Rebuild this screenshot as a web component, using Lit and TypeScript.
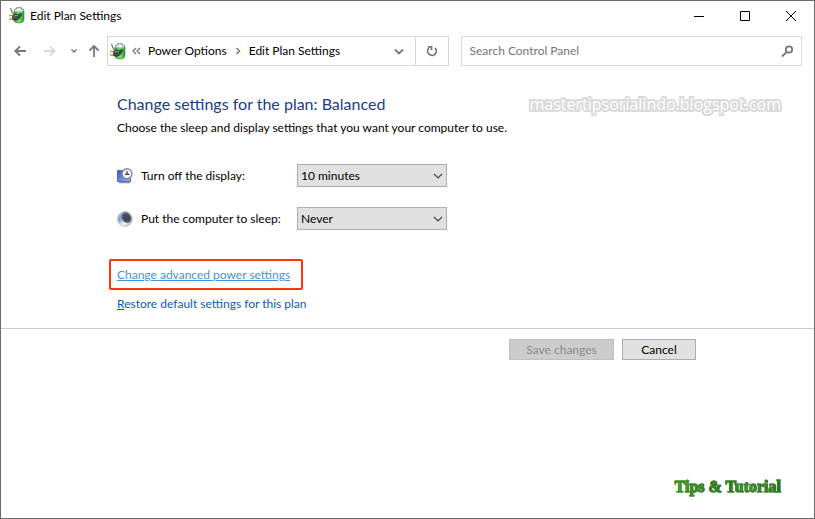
import { LitElement, html, css, svg } from "lit";
import { customElement, property } from "lit/decorators.js";

@customElement("power-icon")
class PowerIcon extends LitElement {
  static styles = css`
    :host { display: block; width: 16px; height: 17px; flex: none; }
    svg { display: block; }
  `;
  render() {
    return html`<svg width="16" height="17" viewBox="0 0 16 17" aria-hidden="true">
      <defs>
        <linearGradient id="g" x1="0" x2="1"><stop offset="0" stop-color="#2a9a35" /><stop offset=".5" stop-color="#7bea6c" /><stop offset="1" stop-color="#1f9a38" /></linearGradient>
      </defs>
      <path d="M5 4Q5.300 1.800 7.500 1.600V.8Q10 0 12.300.8v.8Q14.800 2 15 4v9Q14.500 15.800 10 16 5.500 16 5 13.500z" fill="url(#g)" stroke="#3c7a45" stroke-width=".6" />
      <path d="M5.400 3.500Q5.700 2.100 7.800 1.900V1Q10 .3 12 1v.9Q14.600 2.200 14.700 4 12 5.500 5.400 4.500z" fill="#eef3ef" stroke="#8a998f" stroke-width=".6" />
      <path d="M1.500 1C2 3.500 3 5.500 5 7.300" fill="none" stroke="#6d7379" stroke-width="1.200" />
      <path d="M0 8.500h4M0 12h4" stroke="#c99e25" stroke-width="1.600" />
      <path d="M3.500 8.300Q6 6.500 9 7.400L12 6.500l.8 1.500-2.800 4Q7 14 3.500 12.700z" fill="#44494c" stroke="#2b2f31" stroke-width=".5" />
      <path d="M4.500 9.200Q6.500 8 9 8.700" fill="none" stroke="#969b9e" stroke-width="1.100" />
    </svg>`;
  }
}

const icons = {
  back: svg`<path d="M14 8H3M8 3.500 3.300 8 8 12.500" />`,
  forward: svg`<path d="M2 8h11M8 3.500 12.700 8 8 12.500" />`,
  up: svg`<path d="M8 14V3M3.300 7.700 8 3l4.700 4.700" />`,
  recent: svg`<path d="M5.500 6.500 8 9l2.500-2.500" stroke-width="1.500" />`,
  down: svg`<path d="M4 6.500l4 4 4-4" />`,
  thin: svg`<path d="M4 6l4 4 4-4" stroke-width="1.200" />`,
  right: svg`<path d="M6.500 5l3 3-3 3" stroke-width="1.500" />`,
  left: svg`<path d="M7 5 4 8l3 3M11 5 8 8l3 3" stroke-width="1.300" />`,
  refresh: svg`<path d="M4.700 5.200A4.300 4.300 0 1 0 11 5M4 3.800h3.500v3.500" />`,
  search: svg`<circle cx="10" cy="6.500" r="3.200" /><path d="M7.700 9 3 13.500" />`,
};

@customElement("line-icon")
class LineIcon extends LitElement {
  @property() name: keyof typeof icons = "down";
  static styles = css`
    :host { display: block; width: 16px; height: 16px; flex: none; }
    svg { display: block; fill: none; stroke: currentColor; stroke-width: 1.8; }
  `;
  render() {
    return html`<svg width="16" height="16" viewBox="0 0 16 16" aria-hidden="true">${icons[this.name]}</svg>`;
  }
}

@customElement("app-root")
class AppRoot extends LitElement {
  static styles = css`
    :host {
      display: block;
      font: 12px/16px Lato, "Open Sans", sans-serif;
      color: #000;
    }
    * { box-sizing: border-box; }
    button, select, input { font: inherit; color: inherit; border-radius: 0; margin: 0; }
    button { padding: 0; border: 0; background: none; display: flex; align-items: center; justify-content: center; }
    .window {
      display: flex;
      flex-direction: column;
      min-height: 100vh;
      background: #fff;
      border: 1px solid #6b6a6c;
    }
    .titlebar { display: flex; align-items: center; height: 29px; padding-left: 8px; gap: 5px; }
    .title { flex: 1; margin: 0; font-size: 12px; font-weight: 400; }
    .caption { display: flex; }
    .caption button { width: 46px; height: 29px; }
    .caption svg { fill: none; stroke: #000; }
    .navbar { display: grid; grid-template-columns: 95px 1fr 1fr; align-items: center; padding: 6px 12px 0 11px; color: #777; }
    .history { display: flex; align-items: center; }
    .history button { height: 30px; width: 16px; }
    .history .forward { margin-left: 14px; color: #d8d8d8; }
    .history .recent { margin-left: 8px; }
    .history .up { margin-left: 4px; }
    .address, .search { min-width: 0; display: flex; align-items: center; height: 30px; border: 1px solid #d9d9d9; }
    .address { margin-right: 6px; padding-left: 2px; }
    .crumbs { flex: 1; display: flex; align-items: center; gap: 3px; }
    .crumbs a { color: #000; text-decoration: none; white-space: nowrap; }
    .address .drop { width: 32px; height: 28px; }
    .address .refresh { width: 33px; height: 28px; border-left: 1px solid #d9d9d9; }
    .search { margin-left: 6px; padding: 0 6px 0 8px; }
    .search input { flex: 1; min-width: 0; border: 0; padding: 0; background: none; outline: 0; }
    .search input::placeholder { color: #757575; opacity: 1; }
    .content { position: relative; padding: 28px 32px 16px 116px; }
    .watermark {
      position: absolute;
      top: 26px;
      right: 33px;
      font: 16px/24px "Open Sans", sans-serif;
      color: #fff;
      -webkit-text-stroke: 4px #dadada;
      paint-order: stroke fill;
    }
    h1 { margin: 0; font-size: 16px; line-height: 20px; font-weight: 400; color: #1a3c8c; }
    .intro { margin: 6px 0 28px; }
    .settings { display: grid; grid-template-columns: 16px 148px 150px; column-gap: 8px; row-gap: 20px; align-items: center; }
    .settings label { white-space: nowrap; }
    .picker { display: grid; align-items: center; }
    .picker select, .picker line-icon { grid-area: 1 / 1; }
    .picker select { appearance: none; width: 100%; height: 23px; padding: 0 3px; border: 1px solid #adadad; background: #e1e1e1; }
    .picker line-icon { justify-self: end; margin-right: 1px; color: #444; pointer-events: none; }
    .links { display: flex; flex-direction: column; align-items: flex-start; gap: 6px; margin: 29px 0 0 -8px; }
    .links a { color: #0a5cbd; text-decoration: none; }
    .links .advanced { padding: 6px 11px 5px 6px; border: 2px solid #f9360c; border-radius: 2px; color: #3f93dc; text-decoration: underline; }
    .links .restore { margin-left: 8px; }
    .actions { display: flex; justify-content: flex-end; gap: 8px; padding: 10px 118px 0 0; border-top: 1px solid #ccc; }
    .actions button { height: 21px; border: 1px solid #adadad; background: #e1e1e1; }
    .actions .save { width: 105px; border-color: #bfbfbf; background: #ccc; color: #8a8a8a; }
    .actions .cancel { width: 74px; }
    .brand {
      align-self: flex-end;
      margin: auto 33px 19px 0;
      font: 700 16px/24px "Liberation Serif", serif;
      color: transparent;
      background: linear-gradient(90deg, #5db32b, #2f7a22 30%, #2c6b2a 50%, #57984b 70%, #1d5a1d);
      background-clip: text;
      -webkit-background-clip: text;
      -webkit-text-stroke: 1px #3a8428;
    }
  `;

  render() {
    return html`
      <div class="window">
        <header class="titlebar">
          <power-icon></power-icon>
          <h2 class="title">Edit Plan Settings</h2>
          <div class="caption">
            <button aria-label="Minimize"><svg width="12" height="12"><path d="M1 6.500h10" /></svg></button>
            <button aria-label="Maximize"><svg width="12" height="12"><path d="M1.500 1.500h9v9h-9z" /></svg></button>
            <button aria-label="Close"><svg width="12" height="12"><path d="M1 1l10 10M11 1 1 11" /></svg></button>
          </div>
        </header>
        <nav class="navbar">
          <div class="history">
            <button aria-label="Back"><line-icon name="back"></line-icon></button>
            <button class="forward" aria-label="Forward"><line-icon name="forward"></line-icon></button>
            <button class="recent" aria-label="Recent locations"><line-icon name="recent"></line-icon></button>
            <button class="up" aria-label="Up"><line-icon name="up"></line-icon></button>
          </div>
          <div class="address">
            <div class="crumbs">
              <power-icon></power-icon>
              <line-icon name="left"></line-icon>
              <a href="#power">Power Options</a>
              <line-icon name="right"></line-icon>
              <a href="#plan">Edit Plan Settings</a>
            </div>
            <button class="drop" aria-label="Previous locations"><line-icon name="down"></line-icon></button>
            <button class="refresh" aria-label="Refresh"><line-icon name="refresh"></line-icon></button>
          </div>
          <div class="search">
            <input type="text" aria-label="Search Control Panel" placeholder="Search Control Panel" />
            <line-icon name="search"></line-icon>
          </div>
        </nav>
        <main class="content">
          <h1>Change settings for the plan: Balanced</h1>
          <p class="intro">Choose the sleep and display settings that you want your computer to use.</p>
          <div class="settings">
            <svg width="16" height="16" viewBox="0 0 16 16" aria-hidden="true">
              <defs><linearGradient id="screen" x1="0" y1="0" x2="1" y2="1"><stop stop-color="#3f51c4" /><stop offset="1" stop-color="#9db4f5" /></linearGradient></defs>
              <path d="M.5 2.500h13v11H.5z" fill="url(#screen)" stroke="#5a66bd" />
              <path d="M2 14.500h11" stroke="#8b8f9c" stroke-width="1.500" />
              <circle cx="10" cy="5.800" r="5" fill="#f3f5f7" stroke="#858b93" stroke-width="1.400" />
              <path d="M10 3v3.500M8 6.300h4.500" fill="none" stroke="#39424e" stroke-width="1.200" />
            </svg>
            <label for="display">Turn off the display:</label>
            <div class="picker">
              <select id="display"><option>10 minutes</option></select>
              <line-icon name="thin"></line-icon>
            </div>
            <svg width="16" height="16" viewBox="0 0 16 16" aria-hidden="true">
              <defs>
                <linearGradient id="moon" x1="0" y1="0" x2="1" y2="1"><stop stop-color="#c8cdd4" /><stop offset=".35" stop-color="#7fa0d0" /><stop offset=".6" stop-color="#f0f5fc" /><stop offset="1" stop-color="#9aa6b8" /></linearGradient>
                <radialGradient id="shade"><stop offset=".5" stop-color="#3f4754" /><stop offset="1" stop-color="#5c6a80" /></radialGradient>
              </defs>
              <circle cx="8" cy="8" r="7.500" fill="url(#moon)" stroke="#b6bcc6" stroke-width=".7" />
              <ellipse cx="9.500" cy="6.700" rx="4.600" ry="5.600" transform="rotate(-40 9.500 6.700)" fill="url(#shade)" />
            </svg>
            <label for="sleep">Put the computer to sleep:</label>
            <div class="picker">
              <select id="sleep"><option>Never</option></select>
              <line-icon name="thin"></line-icon>
            </div>
          </div>
          <div class="links">
            <a class="advanced" href="#advanced">Change advanced power settings</a>
            <a class="restore" href="#restore"><u>R</u>estore default settings for this plan</a>
          </div>
          <div class="watermark">mastertipsorialindo.blogspot.com</div>
        </main>
        <div class="actions">
          <button class="save" disabled>Save changes</button>
          <button class="cancel">Cancel</button>
        </div>
        <div class="brand">Tips &amp; Tutorial</div>
      </div>
    `;
  }
}
